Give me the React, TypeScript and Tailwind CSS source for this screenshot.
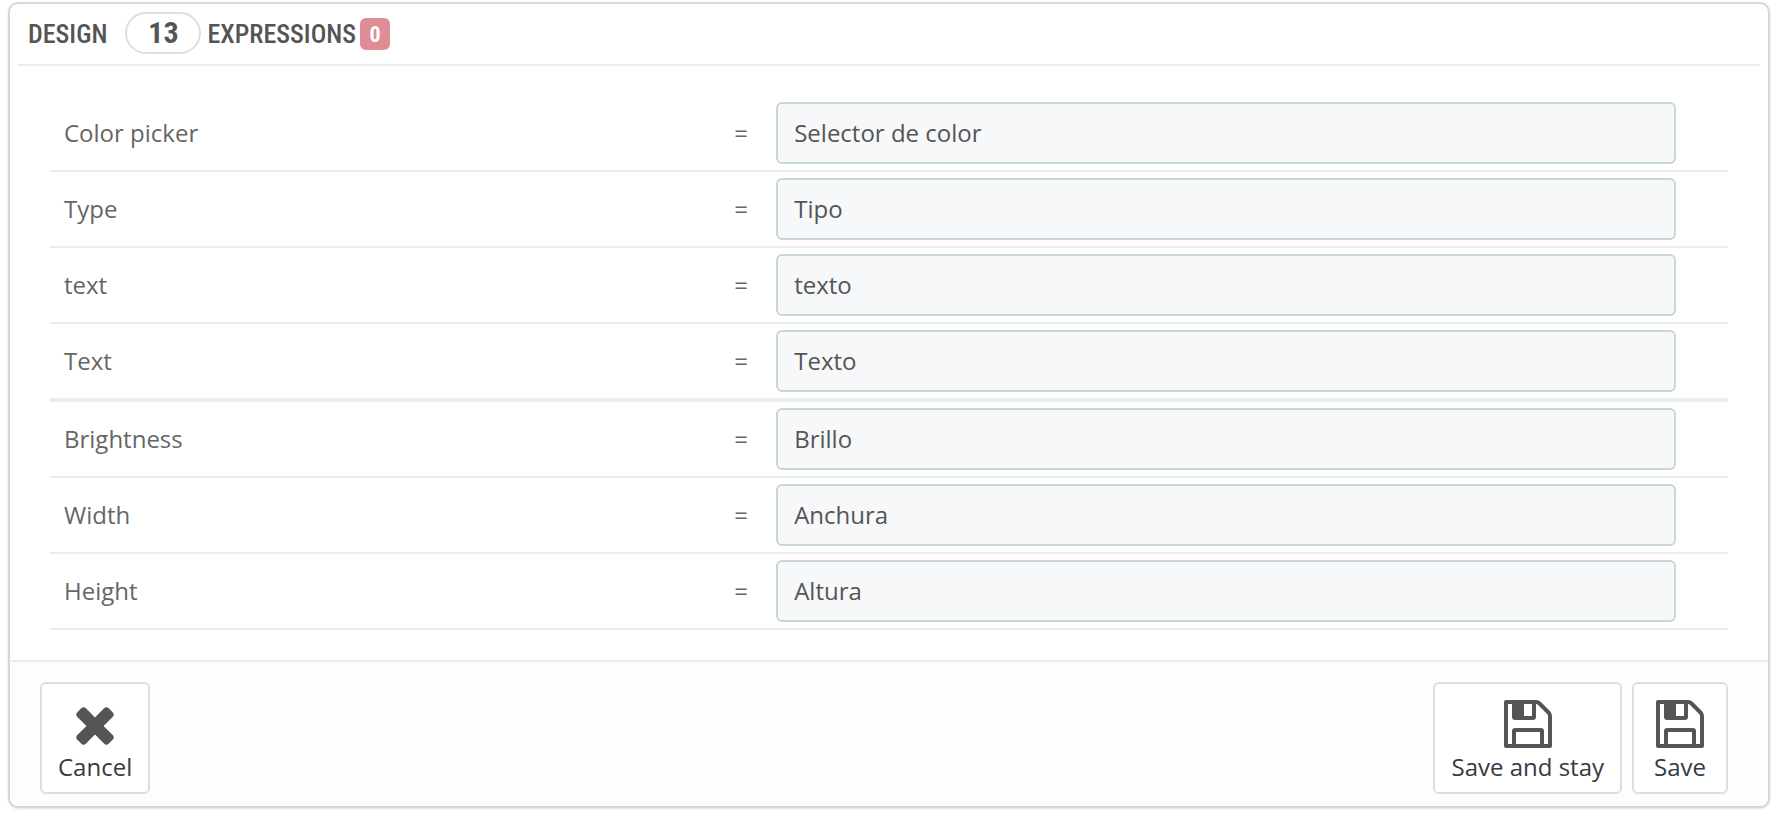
type Expression = { id: string; source: string; translation: string; divider?: boolean };

const expressions: Expression[] = [
  { id: 'color-picker', source: 'Color picker', translation: 'Selector de color' },
  { id: 'type', source: 'Type', translation: 'Tipo' },
  { id: 'text-lower', source: 'text', translation: 'texto' },
  { id: 'text-title', source: 'Text', translation: 'Texto', divider: true },
  { id: 'brightness', source: 'Brightness', translation: 'Brillo' },
  { id: 'width', source: 'Width', translation: 'Anchura' },
  { id: 'height', source: 'Height', translation: 'Altura' },
];

const buttonClass =
  'flex h-28 min-w-24 flex-col items-center gap-[3px] rounded-md border-2 border-[#dddede] bg-white px-4 pt-4 text-2xl text-[#363a41]';

function CloseIcon() {
  return (
    <svg viewBox="136 137 1520 1520" className="size-12" fill="#555" aria-hidden="true">
      <path d="M1490 1322q0 40-28 68l-136 136q-28 28-68 28t-68-28l-294-294-294 294q-28 28-68 28t-68-28l-136-136q-28-28-28-68t28-68l294-294-294-294q-28-28-28-68t28-68l136-136q28-28 68-28t68 28l294 294 294-294q28-28 68-28t68 28l136 136q28 28 28 68t-28 68l-294 294 294 294q28 28 28 68z" />
    </svg>
  );
}

function SaveIcon() {
  return (
    <svg viewBox="0 0 48 48" className="size-12" fill="none" stroke="#555" strokeWidth="4" strokeLinejoin="round" aria-hidden="true">
      <path d="M2 2h30q2 0 3.500 1.500l9 9q1.500 1.500 1.500 3.500v30H2z" />
      <path d="M10 46V31q0-1 1-1h26q1 0 1 1v15" />
      <path d="M10 2v15q0 1 1 1h18q1 0 1-1V2" />
      <path d="M10 2h10v16H10z" fill="#555" stroke="none" />
    </svg>
  );
}

export default function App() {
  return (
    <main className="bg-white pt-0.5 pr-2.5 pb-2.5 pl-2 font-['Open_Sans',sans-serif] text-2xl text-[#666]">
      <section className="overflow-hidden rounded-[10px] border-2 border-[#d5d8d9] bg-white shadow-sm">
        <h2 className="mx-2 flex h-[62px] items-center border-b-2 border-[#ebecec] pb-0.5 pl-2.5 font-['Ubuntu_Condensed','Roboto_Condensed',sans-serif] text-[26px] leading-8 font-medium text-[#555]">
          <span className="pt-0.5">DESIGN</span>
          <span className="mr-1.5 ml-[18px] flex h-[42px] w-[76px] items-center justify-center rounded-full border-2 border-[#dddede] text-[30px] font-bold">
            13
          </span>
          <span className="pt-0.5">EXPRESSIONS</span>
          <span className="mt-0.5 ml-1 flex h-8 w-[30px] items-center justify-center rounded-md bg-[#df8d95] pt-0.5 text-[22px] font-bold text-white">
            0
          </span>
        </h2>

        <div className="px-10 py-[30px]">
          <table className="w-full table-fixed border-separate border-spacing-0">
            <colgroup>
              <col className="w-2/5" />
              <col className="w-10" />
              <col />
            </colgroup>
            <tbody>
              {expressions.map(({ id, source, translation, divider }) => (
                <tr key={id} className={divider ? '*:border-b-4 *:border-[#ebecec]' : '*:border-b-2 *:border-[#ebecec]'}>
                  <td className="pl-3.5">
                    <label htmlFor={id}>{source}</label>
                  </td>
                  <td className="text-center">=</td>
                  <td className="py-1.5 pr-[52px] pl-[15px]">
                    <input
                      id={id}
                      type="text"
                      defaultValue={translation}
                      className="block h-[62px] w-full rounded-md border-2 border-[#c7d6d6] bg-[#f6f8fa] px-4 pb-0.5 text-[#555]"
                    />
                  </td>
                </tr>
              ))}
            </tbody>
          </table>
        </div>

        <footer className="flex items-start justify-between border-t-2 border-[#ebecec] bg-[#fbfdfe] pt-5 pr-10 pb-3 pl-[30px]">
          <button type="button" className={buttonClass}>
            <CloseIcon />
            Cancel
          </button>
          <div className="flex gap-2.5">
            <button type="submit" className={buttonClass}>
              <SaveIcon />
              Save and stay
            </button>
            <button type="submit" className={buttonClass}>
              <SaveIcon />
              Save
            </button>
          </div>
        </footer>
      </section>
    </main>
  );
}
